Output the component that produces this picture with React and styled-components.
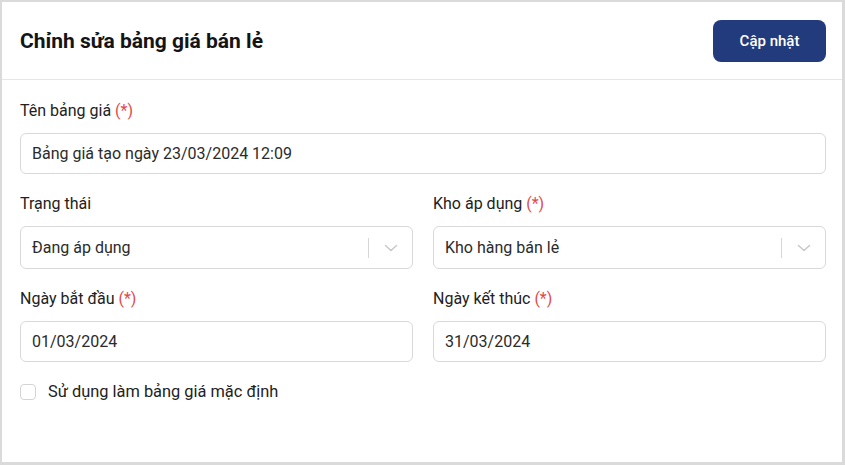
import React, { useState } from "react";
import styled, { createGlobalStyle } from "styled-components";

const GlobalStyle = createGlobalStyle`
  html, body {
    margin: 0;
    padding: 0;
    background: #dadada;
    font-family: Roboto, "Liberation Sans", Arial, sans-serif;
  }
  * { box-sizing: border-box; }
`;

const Card = styled.div`
  margin: 2px 3px 3px 2px;
  height: 460px;
  background: #fff;
`;

const Header = styled.div`
  height: 78px;
  display: flex;
  align-items: center;
  justify-content: space-between;
  padding: 0 16px 0 18px;
  border-bottom: 1px solid #e6e6ea;
`;

const Title = styled.h1`
  margin: 0;
  font-size: 21px;
  font-weight: 700;
  color: #141414;
`;

const Button = styled.button`
  width: 113px;
  height: 42px;
  border: none;
  border-radius: 8px;
  background-color: #223b7c;
  color: #fff;
  font-family: inherit;
  font-size: 15px;
  font-weight: 500;
  cursor: pointer;
`;

const Body = styled.div`
  padding: 21px 16px 0 18px;
  display: flex;
  flex-direction: column;
  gap: 20px;
`;

const Row = styled.div`
  display: grid;
  grid-template-columns: 1fr 1fr;
  column-gap: 20px;
`;

const Field = styled.div`
  display: flex;
  flex-direction: column;
  gap: 12px;
`;

const Label = styled.label`
  font-size: 16px;
  line-height: 20px;
  color: #222;
`;

const Required = styled.span`
  color: #e2494b;
`;

const Box = styled.div`
  height: ${(p) => (p.$tall ? 43 : 41)}px;
  border: 1px solid #d9d9d9;
  border-radius: 6px;
  display: flex;
  align-items: center;
  padding-left: 11px;
  font-size: 16px;
  color: #2b2b2b;
`;

const Value = styled.span`
  flex: 1;
`;

const Separator = styled.span`
  width: 1px;
  height: 20px;
  background: #d6d6d6;
`;

const Indicator = styled.span`
  width: 43px;
  display: flex;
  justify-content: center;
  color: #c8c8c8;
`;

const CheckRow = styled.label`
  display: flex;
  align-items: center;
  gap: 12px;
  font-size: 16.4px;
  line-height: 20px;
  color: #222;
  cursor: pointer;
`;

const CheckBox = styled.span`
  width: 16px;
  height: 16px;
  border: 1px solid #d4d4d4;
  border-radius: 4px;
  background: ${(p) => (p.$checked ? "#223b7c" : "#fff")};
`;

const Chevron = () => (
  <svg width="14" height="8" viewBox="0 0 14 8" fill="none">
    <path d="M1.5 1.5 L7 6.5 L12.5 1.5" stroke="currentColor" strokeWidth="1.5" strokeLinecap="round" strokeLinejoin="round" />
  </svg>
);

const Select = ({ value }) => (
  <Box $tall>
    <Value>{value}</Value>
    <Separator />
    <Indicator>
      <Chevron />
    </Indicator>
  </Box>
);

const App = () => {
  const [isDefault, setIsDefault] = useState(false);

  return (
    <>
      <GlobalStyle />
      <Card>
        <Header>
          <Title>Chỉnh sửa bảng giá bán lẻ</Title>
          <Button>Cập nhật</Button>
        </Header>
        <Body>
          <Field>
            <Label>
              Tên bảng giá <Required>(*)</Required>
            </Label>
            <Box>Bảng giá tạo ngày 23/03/2024 12:09</Box>
          </Field>
          <Row>
            <Field>
              <Label>Trạng thái</Label>
              <Select value="Đang áp dụng" />
            </Field>
            <Field>
              <Label>
                Kho áp dụng <Required>(*)</Required>
              </Label>
              <Select value="Kho hàng bán lẻ" />
            </Field>
          </Row>
          <Row>
            <Field>
              <Label>
                Ngày bắt đầu <Required>(*)</Required>
              </Label>
              <Box>01/03/2024</Box>
            </Field>
            <Field>
              <Label>
                Ngày kết thúc <Required>(*)</Required>
              </Label>
              <Box>31/03/2024</Box>
            </Field>
          </Row>
          <CheckRow onClick={() => setIsDefault(!isDefault)}>
            <CheckBox $checked={isDefault} />
            Sử dụng làm bảng giá mặc định
          </CheckRow>
        </Body>
      </Card>
    </>
  );
};

export default App;
